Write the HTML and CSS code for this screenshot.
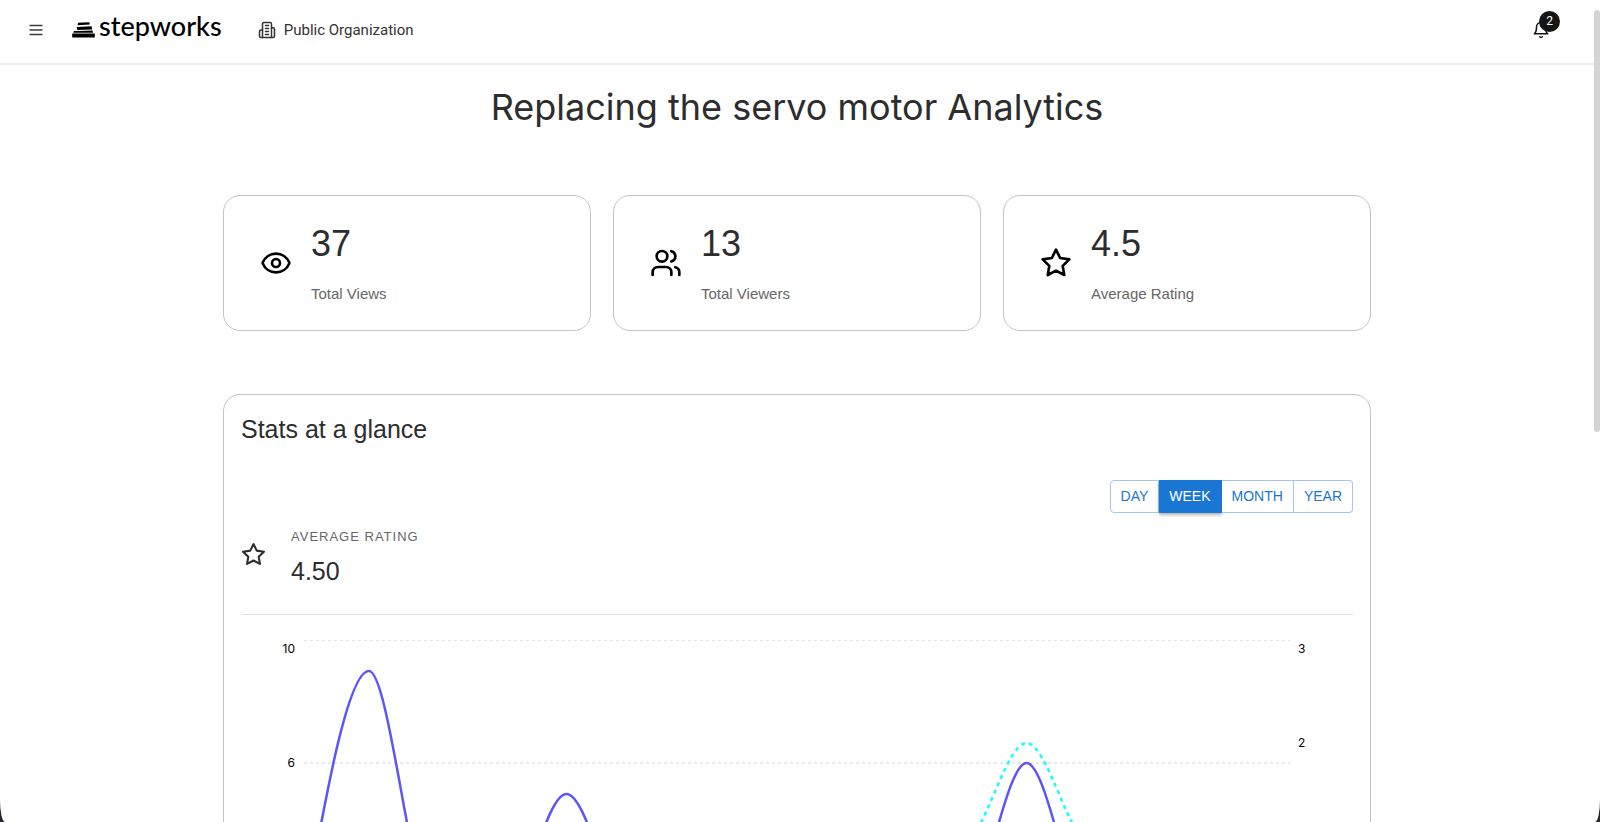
FILE: index.html
```html
<!DOCTYPE html>
<html lang="en">
<head>
<meta charset="utf-8">
<meta name="viewport" content="width=device-width, initial-scale=1">
<title>Replacing the servo motor Analytics</title>
<link rel="stylesheet" href="styles.css">
</head>
<body>
<div class="window">
  <div class="page">
    <header class="topbar">
      <button class="icon-button menu-button" type="button" aria-label="Open menu">
        <svg width="14" height="14" viewBox="0 0 14 14" stroke="#3c3c3c" stroke-width="1.600"><path d="M.5 2.500h13M.5 7h13M.5 11.500h13"/></svg>
      </button>
      <a class="brand" href="#">
        <svg class="brand-mark" width="23" height="16" viewBox="0 0 23 16" aria-hidden="true"><path d="M6 .8 17.400.2l.4 2.300-12.200.8zM4.600 4.900 19.700 4.300l.4 3.100-14.800.7zM2 9l5 .1 13.500-.7.6 2.400H1.200zM.2 11.500h22.600v4H.2z"/></svg>
        <span>stepworks</span>
      </a>
      <a class="org" href="#">
        <svg width="18" height="18" viewBox="0 0 24 24" fill="none" stroke="#333" stroke-width="2" stroke-linecap="round" stroke-linejoin="round" aria-hidden="true"><path d="M6 22V4a2 2 0 0 1 2-2h8a2 2 0 0 1 2 2v18Z"/><path d="M6 12H4a2 2 0 0 0-2 2v6a2 2 0 0 0 2 2h2"/><path d="M18 9h2a2 2 0 0 1 2 2v9a2 2 0 0 1-2 2h-2"/><path d="M10 6h4M10 10h4M10 14h4M10 18h4"/></svg>
        <span>Public Organization</span>
      </a>
      <button class="icon-button bell-button" type="button" aria-label="Notifications">
        <svg width="18" height="18" viewBox="0 0 24 24" fill="none" stroke="#111" stroke-width="2" stroke-linecap="round" stroke-linejoin="round"><path d="M6 8a6 6 0 0 1 12 0c0 7 3 9 3 9H3s3-2 3-9"/><path d="M10.300 21a1.940 1.940 0 0 0 3.400 0"/></svg>
        <span class="badge">2</span>
      </button>
    </header>

    <main class="content">
      <h1 class="title">Replacing the servo motor Analytics</h1>

      <section class="cards">
        <article class="card">
          <svg class="card-icon" viewBox="0 0 24 24" aria-hidden="true"><path d="M2.062 12.348a1 1 0 0 1 0-.696 10.750 10.750 0 0 1 19.876 0 1 1 0 0 1 0 .696 10.750 10.750 0 0 1-19.876 0"/><circle cx="12" cy="12" r="3"/></svg>
          <div class="card-text"><span class="card-value">37</span><span class="card-label">Total Views</span></div>
        </article>
        <article class="card">
          <svg class="card-icon" viewBox="0 0 24 24" aria-hidden="true"><path d="M16 21v-2a4 4 0 0 0-4-4H6a4 4 0 0 0-4 4v2"/><circle cx="9" cy="7" r="4"/><path d="M22 21v-2a4 4 0 0 0-3-3.870M16 3.130a4 4 0 0 1 0 7.750"/></svg>
          <div class="card-text"><span class="card-value">13</span><span class="card-label">Total Viewers</span></div>
        </article>
        <article class="card">
          <svg class="card-icon" viewBox="0 0 24 24" aria-hidden="true"><path d="M12 2l3.090 6.260L22 9.270l-5 4.870 1.180 6.880L12 17.770l-6.180 3.250L7 14.140 2 9.270l6.910-1.010z"/></svg>
          <div class="card-text"><span class="card-value">4.5</span><span class="card-label">Average Rating</span></div>
        </article>
      </section>

      <section class="panel">
        <h2 class="panel-title">Stats at a glance</h2>
        <div class="range" role="group" aria-label="Range">
          <button type="button">DAY</button>
          <button type="button" class="active" aria-pressed="true">WEEK</button>
          <button type="button">MONTH</button>
          <button type="button">YEAR</button>
        </div>
        <div class="rating">
          <svg class="rating-icon" viewBox="0 0 24 24" aria-hidden="true"><path d="M12 2l3.090 6.260L22 9.270l-5 4.870 1.180 6.880L12 17.770l-6.180 3.250L7 14.140 2 9.270l6.910-1.010z"/></svg>
          <div class="rating-text"><span class="rating-label">AVERAGE RATING</span><span class="rating-value">4.50</span></div>
        </div>
        <svg class="chart" viewBox="0 0 1112 370" role="img" aria-label="Views and viewers per week">
          <g class="grid">
            <path class="grid-top" d="M63 25.500H1049"/>
            <path d="M63 148H1049M63 271H1049"/>
          </g>
          <g class="ticks">
            <text x="54" y="38" text-anchor="end">10</text>
            <text x="54" y="152" text-anchor="end">6</text>
            <text x="1057" y="38">3</text>
            <text x="1057" y="132">2</text>
          </g>
          <path class="viewers" d="M63 230H720C742 230 764 128 785.500 128S829 230 851 230H1049"/>
          <path class="views" d="M63 301C85 179 107 56 128 56S172 301 194 301H260C282 301 304 179 325.500 179S370 301 392 301H720C742 301 764 148 785.500 148S829 301 851 301H1049"/>
        </svg>
      </section>
    </main>
  </div>
  <div class="scrollbar" aria-hidden="true"><div class="thumb"></div></div>
</div>
</body>
</html>
```

FILE: styles.css
```css
* { box-sizing: border-box; }

body {
  margin: 0;
  background: #26282c;
  color: #2d2d2d;
  font-family: "Liberation Sans", Arial, sans-serif;
}

.window {
  display: flex;
  height: 100vh;
  overflow: hidden;
  background: #fff;
  border-radius: 0 0 5px 5px / 0 0 22px 22px;
}

.page {
  flex: 1;
  min-width: 0;
  overflow-y: auto;
  scrollbar-width: none;
}

.scrollbar { width: 6px; padding-top: 10px; }
.thumb { height: 52%; border-radius: 3px; background: #d4d4d4; }

.topbar {
  display: flex;
  align-items: center;
  height: 65px;
  padding: 0 44px 3px 28px;
  border-bottom: 2px solid #ececec;
}

.icon-button {
  display: flex;
  padding: 0;
  border: 0;
  background: none;
}
.menu-button { padding: 1px; }

.brand {
  display: flex;
  align-items: center;
  gap: 4px;
  margin-left: 28px;
  color: #000;
  font: 500 27px/36px Lato, sans-serif;
  text-decoration: none;
}
.brand span { padding-bottom: 8px; }

.org {
  display: flex;
  align-items: center;
  gap: 8px;
  margin-left: 36px;
  color: #333;
  font: 15px/20px Roboto, sans-serif;
  text-decoration: none;
}

.bell-button {
  position: relative;
  margin-left: auto;
}
.badge {
  position: absolute;
  top: -10px;
  right: -10px;
  width: 21px;
  border-radius: 50%;
  background: #151515;
  color: #fff;
  font: 12px/21px Roboto, sans-serif;
  text-align: center;
}

.content {
  max-width: 1148px;
  margin: 0 auto;
  padding: 20px 0 40px;
}

.title {
  margin: 0 0 66px;
  font: 400 36px/44px Inter, sans-serif;
  text-align: center;
}

.cards {
  display: grid;
  grid-template-columns: repeat(3, 1fr);
  gap: 22px;
  margin-bottom: 63px;
}
.card {
  display: flex;
  align-items: center;
  gap: 19px;
  padding: 23px 36px;
  border: 1px solid #c4c4c4;
  border-radius: 17px;
}
.card-icon {
  width: 32px;
  height: 32px;
  fill: none;
  stroke: #000;
  stroke-width: 2;
  stroke-linecap: round;
  stroke-linejoin: round;
}
.card-text { display: flex; flex-direction: column; gap: 14px; }
.card-value { font-size: 36px; line-height: 50px; }
.card-label { padding-bottom: 2px; color: #666; font-size: 15px; line-height: 22px; }

.panel {
  padding: 17px;
  border: 1px solid #c4c4c4;
  border-radius: 17px;
}
.panel-title {
  margin: 0 0 34px;
  font-size: 25px;
  font-weight: 400;
  line-height: 34px;
}

.range { display: flex; justify-content: flex-end; margin-bottom: 7px; }
.range button {
  padding: 0 10px;
  border: 1px solid #a3c7ee;
  border-left-width: 0;
  background: #fff;
  color: #1976d2;
  font: 14px/31px "Liberation Sans", Arial, sans-serif;
}
.range button:first-child { border-left-width: 1px; border-radius: 4px 0 0 4px; }
.range button:last-child { border-radius: 0 4px 4px 0; }
.range .active {
  border-color: #1976d2;
  background: #1976d2;
  color: #fff;
  box-shadow: 0 2px 3px rgba(0, 0, 0, .3);
}

.rating {
  display: flex;
  align-items: center;
  gap: 25px;
  padding-bottom: 26px;
  border-bottom: 1px solid #e0e0e0;
}
.rating-icon {
  width: 25px;
  height: 25px;
  fill: none;
  stroke: #2d2d2d;
  stroke-width: 2;
  stroke-linejoin: round;
}
.rating-text { display: flex; flex-direction: column; line-height: 34px; }
.rating-label { color: #666; font-size: 13px; letter-spacing: 1px; }
.rating-value { font-size: 25px; }

.chart { display: block; width: 100%; height: auto; }
.grid { fill: none; stroke: #d2d2d2; stroke-dasharray: 3 3; }
.grid-top { stroke: #e2e2e2; }
.ticks { fill: #000; font: 12px Inter, sans-serif; }
.views { fill: none; stroke: #5b55fa; stroke-width: 2.5; }
.viewers { fill: none; stroke: #1ff; stroke-width: 2.5; stroke-dasharray: 4 4; }
```
